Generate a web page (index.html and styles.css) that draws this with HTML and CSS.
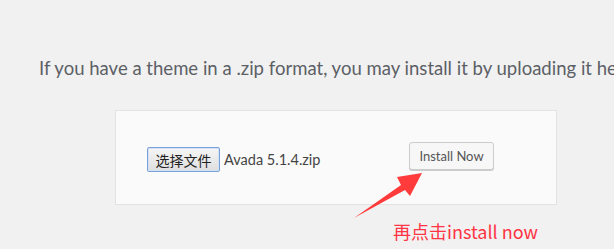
FILE: index.html
```html
<!DOCTYPE html>
<html>
<head>
<meta charset="utf-8">
<link rel="stylesheet" href="styles.css">
</head>
<body>
<div class="page">
  <p class="intro">If you have a theme in a .zip format, you may install it by uploading it here.</p>
  <div class="upload-box">
    <div class="file-field">
      <button class="file-btn" type="button">选择文件</button>
      <span class="file-name">Avada 5.1.4.zip</span>
    </div>
    <button class="install-btn" type="button">Install Now</button>
  </div>
  <div class="note">再点击install now</div>
  <svg class="arrow" width="614" height="249" viewBox="0 0 614 249">
    <polygon points="354,218 401,185 397,177 422,173 410,196 405,190" fill="#ff3b3b"/>
  </svg>
</div>
</body>
</html>
```
FILE: styles.css
```css
html, body {
  margin: 0;
  padding: 0;
  background: #f1f1f1;
}
.page {
  position: relative;
  width: 614px;
  height: 249px;
  overflow: hidden;
  font-family: "Noto Sans", "Liberation Sans", sans-serif;
}
.intro {
  margin: 0;
  padding: 56px 0 0 39px;
  font-family: Lato, "Noto Sans", sans-serif;
  font-size: 18.55px;
  line-height: 24px;
  color: #5c6066;
  white-space: nowrap;
}
.upload-box {
  margin: 30px 0 0 115px;
  width: 440px;
  height: 93px;
  border: 1px solid #e3e3e3;
  background: #fafafa;
  display: flex;
  align-items: center;
  box-sizing: content-box;
}
.file-field {
  display: flex;
  align-items: center;
  margin-left: 31px;
  margin-top: 4px;
  width: 262px;
}
.file-btn {
  width: 73px;
  height: 25px;
  padding: 0;
  border: 1px solid #7aa0d8;
  border-radius: 2px;
  background: linear-gradient(#f6f6f6, #dedede);
  font-family: "Noto Sans CJK SC", sans-serif;
  font-size: 14px;
  color: #222;
  box-shadow: inset 0 0 0 1px #d4e2f5;
}
.file-name {
  margin-left: 4px;
  font-family: Lato, "Noto Sans", sans-serif;
  font-size: 14.5px;
  color: #444;
}
.install-btn {
  width: 85px;
  height: 28px;
  padding: 0;
  border: 1px solid #cccccc;
  border-radius: 3px;
  background: #f7f7f7;
  box-shadow: 0 1px 0 #cccccc;
  font-family: Lato, "Noto Sans", sans-serif;
  font-size: 13px;
  color: #555;
  margin-top: -4px;
}
.note {
  margin: 14px 0 0 393px;
  font-family: "Noto Sans CJK SC", sans-serif;
  font-size: 18px;
  line-height: 24px;
  color: #ff3444;
}
.arrow {
  position: absolute;
  left: 0;
  top: 0;
  pointer-events: none;
}
```
